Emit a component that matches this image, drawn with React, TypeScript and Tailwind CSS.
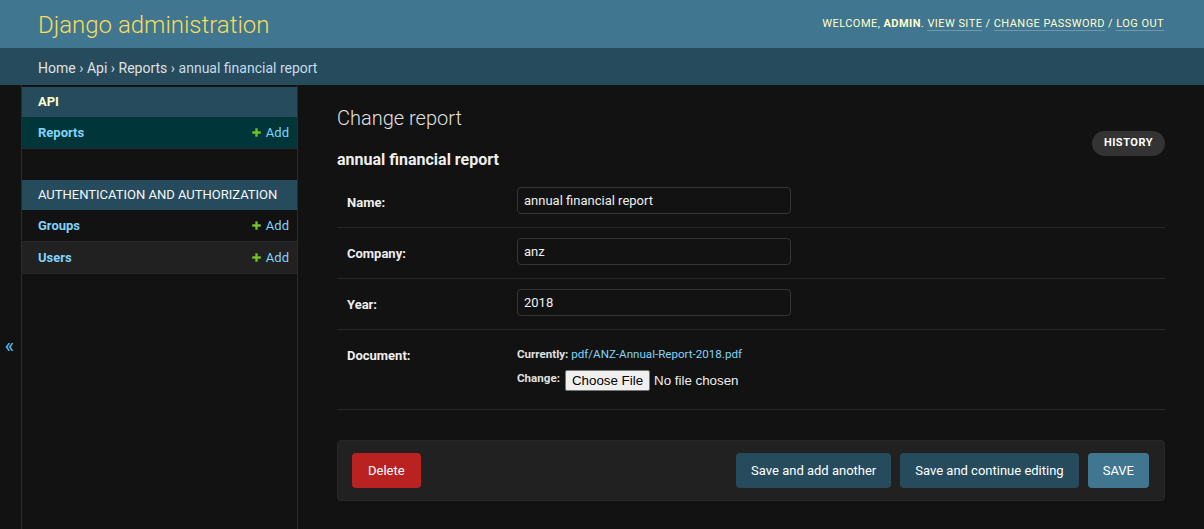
import React from 'react';

const font = { fontFamily: 'Roboto, "Liberation Sans", Arial, sans-serif' };

function AddLink() {
  return (
    <a className="flex items-center gap-[4px] text-[13px] font-normal text-[#81d4fa]">
      <svg width="11" height="11" viewBox="0 0 1792 1792" className="shrink-0">
        <path
          fill="#70bf2b"
          d="M1600 796v192q0 40-28 68t-68 28h-416v416q0 40-28 68t-68 28h-192q-40 0-68-28t-28-68v-416h-416q-40 0-68-28t-28-68v-192q0-40 28-68t68-28h416v-416q0-40 28-68t68-28h192q40 0 68 28t28 68v416h416q40 0 68 28t28 68z"
        />
      </svg>
      Add
    </a>
  );
}

function SidebarRow({ name, bg }: { name: string; bg: string }) {
  return (
    <div className={`flex h-[32px] items-center justify-between border-b border-[#272727] pl-[16px] pr-[8px] ${bg}`}>
      <a className="text-[13px] font-bold text-[#81d4fa]">{name}</a>
      <AddLink />
    </div>
  );
}

function Caption({ label, bold }: { label: string; bold?: boolean }) {
  return (
    <div
      className={`flex h-[30px] items-center bg-[#264b5d] pl-[16px] text-[13px] uppercase text-[#f7f7f7] ${
        bold ? 'font-bold text-[#ffffcc]' : 'font-normal'
      }`}
    >
      {label}
    </div>
  );
}

function TextRow({ label, value }: { label: string; value: string }) {
  return (
    <div className="flex h-[51px] items-start border-b border-[#272727] px-[10px] pt-[10px]">
      <label className="w-[170px] shrink-0 pt-[8px] text-[13px] font-bold leading-[16px] text-[#eeeeee]">
        {label}
      </label>
      <input
        readOnly
        value={value}
        className="h-[27px] w-[274px] rounded-[4px] border border-[#353535] bg-[#121212] px-[6px] text-[13px] text-[#eeeeee] outline-none"
      />
    </div>
  );
}

export default function App() {
  return (
    <div className="flex min-h-[529px] flex-col bg-[#121212] text-[#eeeeee]" style={font}>
      <header className="flex h-[48px] items-center justify-between bg-[#417690] pl-[38px] pr-[40px]">
        <h1 className="pt-[2px] text-[24px] font-light text-[#f5dd5d]">Django administration</h1>
        <div className="text-[11px] uppercase tracking-[0.45px] text-[#ffffcc]">
          Welcome, <strong className="font-bold">admin</strong>.{' '}
          <a className="border-b border-white/25">View site</a> /{' '}
          <a className="border-b border-white/25">Change password</a> /{' '}
          <a className="border-b border-white/25">Log out</a>
        </div>
      </header>

      <div className="flex h-[37px] items-center bg-[#264b5d] px-[38px] pt-[4px] text-[14px] text-[#c4dce8]">
        <a className="text-[#e0e0e0]">Home</a>
        <span className="px-[3.5px]">›</span>
        <a className="text-[#e0e0e0]">Api</a>
        <span className="px-[3.5px]">›</span>
        <a className="text-[#e0e0e0]">Reports</a>
        <span className="px-[3.5px]">›</span>
        annual financial report
      </div>

      <div className="flex flex-1">
        <div className="flex w-[22px] shrink-0 justify-center border-r border-[#2c2c2c] pt-[249px] pr-[2px]">
          <span className="text-[20px] leading-[24px] text-[#5cc4f5]">«</span>
        </div>

        <nav className="w-[276px] shrink-0 border-r border-[#2c2c2c] pt-[2px]">
          <Caption label="Api" bold />
          <SidebarRow name="Reports" bg="bg-[#00363a]" />
          <div className="h-[31px]" />
          <Caption label="Authentication and Authorization" />
          <SidebarRow name="Groups" bg="bg-[#121212]" />
          <SidebarRow name="Users" bg="bg-[#212121]" />
        </nav>

        <main className="flex-1 px-[39px] pt-[21px]">
          <h1 className="text-[20px] font-light leading-[24px] text-[#e0e0e0]">Change report</h1>
          <div className="flex items-start justify-between">
            <h2 className="mt-[20px] text-[16px] font-bold leading-[20px] text-[#eeeeee]">
              annual financial report
            </h2>
            <a className="mt-[1px] flex h-[25px] items-center rounded-full bg-[#333333] px-[12px] text-[11px] font-bold uppercase tracking-[0.5px] text-white">
              History
            </a>
          </div>

          <div className="mt-[7px]">
            <TextRow label="Name:" value="annual financial report" />
            <TextRow label="Company:" value="anz" />
            <TextRow label="Year:" value="2018" />
            <div className="flex h-[80px] items-start border-b border-[#272727] px-[10px] pt-[10px]">
              <label className="w-[170px] shrink-0 pt-[8px] text-[13px] font-bold leading-[16px] text-[#eeeeee]">
                Document:
              </label>
              <div className="pt-[4px] text-[11.6px]">
                <div className="leading-[20px]">
                  <span className="font-bold text-[#e0e0e0]">Currently:</span>{' '}
                  <a className="text-[#81d4fa]">pdf/ANZ-Annual-Report-2018.pdf</a>
                </div>
                <div className="mt-[6px] flex items-start">
                  <span className="font-bold leading-[16px] text-[#e0e0e0]">Change:</span>
                  <span
                    className="ml-[5px] flex h-[21px] items-center rounded-[2px] border border-[#767676] bg-[#efefef] px-[6px] text-[13.33px] text-black"
                    style={{ fontFamily: '"Liberation Sans", Arial, sans-serif' }}
                  >
                    Choose File
                  </span>
                  <span
                    className="ml-[4px] flex h-[21px] items-center text-[13.33px] text-[#eeeeee]"
                    style={{ fontFamily: '"Liberation Sans", Arial, sans-serif' }}
                  >
                    No file chosen
                  </span>
                </div>
              </div>
            </div>
          </div>

          <div className="mt-[30px] flex items-center gap-[9px] rounded-[4px] border border-[#272727] bg-[#212121] py-[12px] pl-[14px] pr-[15px]">
            <a className="mr-auto flex h-[35px] items-center rounded-[4px] bg-[#ba2121] px-[16px] text-[13px] text-white">
              Delete
            </a>
            <button className="h-[35px] rounded-[4px] bg-[#264b5d] px-[15px] text-[13px] text-white">
              Save and add another
            </button>
            <button className="h-[35px] rounded-[4px] bg-[#264b5d] px-[15px] text-[13px] text-white">
              Save and continue editing
            </button>
            <button className="h-[35px] rounded-[4px] bg-[#417690] px-[15px] text-[13px] text-white">
              SAVE
            </button>
          </div>
        </main>
      </div>
    </div>
  );
}
